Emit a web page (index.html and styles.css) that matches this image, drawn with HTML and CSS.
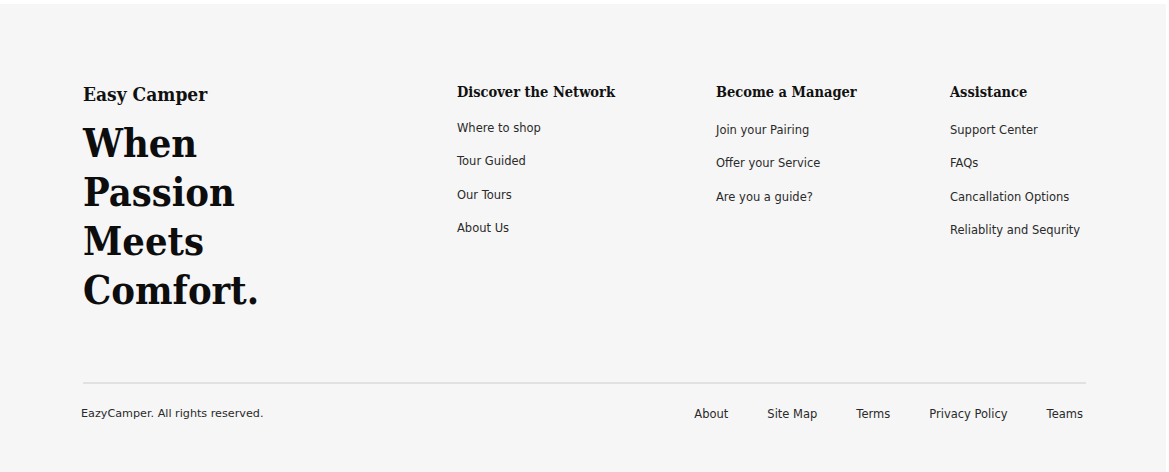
FILE: index.html
```html
<!DOCTYPE html>
<html lang="en">
<head>
<meta charset="utf-8">
<title>Easy Camper Footer</title>
<link rel="stylesheet" href="styles.css">
</head>
<body>
<footer class="footer">
  <div class="footer-top">
    <div class="brand">
      <div class="brand-name">Easy Camper</div>
      <h2 class="brand-tagline">When<br>Passion<br>Meets<br>Comfort.</h2>
    </div>
    <div class="col">
      <h3 class="col-title">Discover the Network</h3>
      <ul class="col-links">
        <li>Where to shop</li>
        <li>Tour Guided</li>
        <li>Our Tours</li>
        <li>About Us</li>
      </ul>
    </div>
    <div class="col col-offset">
      <h3 class="col-title">Become a Manager</h3>
      <ul class="col-links">
        <li>Join your Pairing</li>
        <li>Offer your Service</li>
        <li>Are you a guide?</li>
      </ul>
    </div>
    <div class="col col-offset">
      <h3 class="col-title">Assistance</h3>
      <ul class="col-links">
        <li>Support Center</li>
        <li>FAQs</li>
        <li>Cancallation Options</li>
        <li>Reliablity and Sequrity</li>
      </ul>
    </div>
  </div>
  <div class="divider"></div>
  <div class="footer-bottom">
    <div class="copyright">EazyCamper. All rights reserved.</div>
    <nav class="bottom-links">
      <span>About</span>
      <span>Site Map</span>
      <span>Terms</span>
      <span>Privacy Policy</span>
      <span>Teams</span>
    </nav>
  </div>
</footer>
</body>
</html>
```

FILE: styles.css
```css
html, body {
  margin: 0;
  padding: 0;
  background: #ffffff;
}

.footer {
  margin-top: 4px;
  width: 1166px;
  height: 468px;
  box-sizing: border-box;
  background: #f6f6f6;
  padding: 76px 80px 0 83px;
  color: #111;
}

.footer-top {
  display: grid;
  grid-template-columns: 374px 259px 234px 1fr;
  height: 226px;
}

.brand-name,
.brand-tagline,
.col-title {
  font-family: "DejaVu Serif Condensed", "DejaVu Serif", serif;
  font-stretch: condensed;
  font-weight: bold;
}

.brand-name {
  font-size: 19px;
  line-height: 28px;
  color: #111;
}

.brand-tagline {
  margin: 11px 0 0;
  font-size: 39.5px;
  line-height: 49px;
  color: #0d0d0d;
}

.col-title {
  margin: 0;
  font-size: 14.5px;
  line-height: 22px;
  color: #111;
  padding-top: 1px;
}

.col-links {
  list-style: none;
  margin: 17px 0 0;
  padding: 0;
  display: flex;
  flex-direction: column;
  gap: 17.3px;
}

.col-offset .col-links {
  margin-top: 19px;
}

.col-links li,
.copyright,
.bottom-links span {
  font-family: "DejaVu Sans", sans-serif;
  font-size: 11.5px;
  line-height: 16px;
  color: #2a2a2a;
}

.copyright {
  font-size: 11.2px;
}

.divider {
  height: 2px;
  background: #e1e1e1;
  margin-top: 76px;
}

.footer-bottom {
  display: flex;
  justify-content: space-between;
  align-items: center;
  margin-top: 22px;
  margin-left: -2px;
  margin-right: 3px;
}

.bottom-links {
  display: flex;
  gap: 39px;
}
```
